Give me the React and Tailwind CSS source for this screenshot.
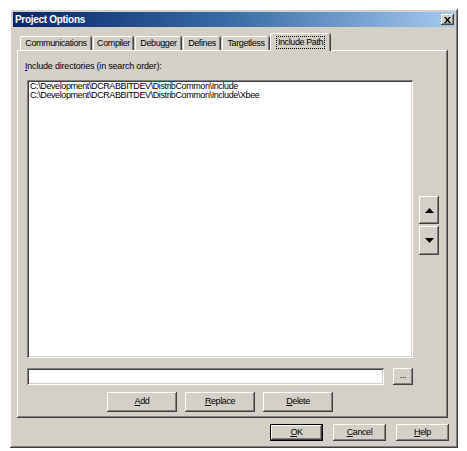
import { useState } from 'react';

const raised =
  'shadow-[inset_-1px_-1px_#404040,inset_1px_1px_#ffffff,inset_-2px_-2px_#808080,inset_2px_2px_#d4d0c8]';
const sunken =
  'shadow-[inset_1px_1px_#808080,inset_-1px_-1px_#ffffff,inset_2px_2px_#404040,inset_-2px_-2px_#d4d0c8]';

const tabs = [
  { label: 'Communications', width: 'w-[71px]' },
  { label: 'Compiler', width: 'w-[40px]' },
  { label: 'Debugger', width: 'w-[46px]' },
  { label: 'Defines', width: 'w-[37px]' },
  { label: 'Targetless', width: 'w-[47px]' },
  { label: 'Include Path', width: 'w-[60px]' }
];

const paths = [
  'C:\\Development\\DCRABBITDEV\\DistribCommon\\Include',
  'C:\\Development\\DCRABBITDEV\\DistribCommon\\Include\\Xbee'
];

const Btn = ({ children, className = '', isDefault = false }) => (
  <button
    className={`flex items-center justify-center bg-[#d4d0c8] text-black ${
      isDefault
        ? 'shadow-[inset_0_0_0_1px_#000000,inset_-2px_-2px_#404040,inset_2px_2px_#ffffff,inset_-3px_-3px_#808080]'
        : raised
    } ${className}`}
  >
    {children}
  </button>
);

const Arrow = ({ up }) => (
  <svg width="9" height="5" viewBox="0 0 9 5">
    <polygon points={up ? '4.5,0 9,5 0,5' : '0,0 9,0 4.5,5'} fill="#000" />
  </svg>
);

export default function App() {
  const [active, setActive] = useState(5);
  const [selected, setSelected] = useState(-1);

  return (
    <div className="w-[467px] h-[451px] bg-white pt-[9px] pl-[10px] font-['Liberation_Sans',Arial,sans-serif] text-[9px] tracking-[-0.4px] text-black">
      <div className={`w-[448px] h-[439px] bg-[#d4d0c8] p-[3px] flex flex-col ${raised}`}>
        {/* Title bar */}
        <div className="h-[15px] flex items-center justify-between pl-[2px] pr-[1px] bg-gradient-to-r from-[#0a246a] via-[#3a6ea5] to-[#a6caf0]">
          <span className="text-white font-bold text-[10px] tracking-[-0.3px] leading-[15px]">Project Options</span>
          <button className={`w-[13px] h-[11px] flex items-center justify-center bg-[#d4d0c8] ${raised}`}>
            <svg width="7" height="6" viewBox="0 0 7 6">
              <path d="M0 0h2l1.5 2 1.5-2h2l-2.5 3 2.5 3h-2l-1.5-2-1.5 2h-2l2.5-3z" fill="#000" />
            </svg>
          </button>
        </div>

        {/* Tabs */}
        <div className="mt-[6px] ml-[4px] h-[17px] flex items-end gap-[2px] pl-[3px]">
          {tabs.map((tab, i) =>
            i === active ? (
              <div
                key={tab.label}
                onClick={() => setActive(i)}
                className={`relative z-10 -mb-px -mx-[1px] h-[18px] ${tab.width} flex items-center justify-center whitespace-nowrap bg-[#d4d0c8] border-l border-t border-white rounded-t-[2px] shadow-[inset_-1px_0_#808080,1px_0_#404040]`}
              >
                <span className="border border-dotted border-black px-[1px] leading-[11px]">{tab.label}</span>
              </div>
            ) : (
              <div
                key={tab.label}
                onClick={() => setActive(i)}
                className={`h-[14px] ${tab.width} flex items-center justify-center whitespace-nowrap bg-[#d4d0c8] border-l border-t border-white rounded-t-[2px] shadow-[inset_-1px_0_#808080,1px_0_#404040]`}
              >
                {tab.label}
              </div>
            )
          )}
        </div>

        {/* Tab panel */}
        <div className={`ml-[4px] w-[431px] h-[368px] pt-[10px] pl-[10px] flex flex-col ${raised}`}>
          <div className="h-[12px] leading-[12px] -ml-[2px] mb-[8px] tracking-[-0.2px]">
            <span className="underline">I</span>nclude directories (in search order):
          </div>

          <div className="flex">
            <div className={`w-[386px] h-[278px] bg-white pt-[2px] pl-[3px] ${sunken}`}>
              {paths.map((p, i) => (
                <div
                  key={p}
                  onClick={() => setSelected(i)}
                  className={`h-[9px] leading-[9px] whitespace-nowrap ${selected === i ? 'bg-[#0a246a] text-white' : ''}`}
                >
                  {p}
                </div>
              ))}
            </div>
            <div className="ml-[6px] pt-[116px] flex flex-col gap-[2px]">
              <Btn className="w-[20px] h-[28px]">
                <Arrow up />
              </Btn>
              <Btn className="w-[20px] h-[29px]">
                <Arrow />
              </Btn>
            </div>
          </div>

          <div className="mt-[10px] flex items-center">
            <div className={`w-[357px] h-[17px] bg-white ${sunken}`} />
            <Btn className="ml-[9px] w-[20px] h-[17px] leading-none pb-[2px]">...</Btn>
          </div>

          <div className="mt-[7px] ml-[80px] flex gap-[8px]">
            <Btn className="w-[70px] h-[20px]">
              <span className="underline">A</span>dd
            </Btn>
            <Btn className="w-[70px] h-[20px]">
              <span className="underline">R</span>eplace
            </Btn>
            <Btn className="w-[70px] h-[20px]">
              <span className="underline">D</span>elete
            </Btn>
          </div>
        </div>

        {/* Dialog buttons */}
        <div className="mt-[6px] flex justify-end gap-[10px] pr-[6px]">
          <Btn isDefault className="w-[53px] h-[17px]">
            <span className="underline">O</span>K
          </Btn>
          <Btn className="w-[53px] h-[17px]">
            <span className="underline">C</span>ancel
          </Btn>
          <Btn className="w-[53px] h-[17px]">
            <span className="underline">H</span>elp
          </Btn>
        </div>
      </div>
    </div>
  );
}
